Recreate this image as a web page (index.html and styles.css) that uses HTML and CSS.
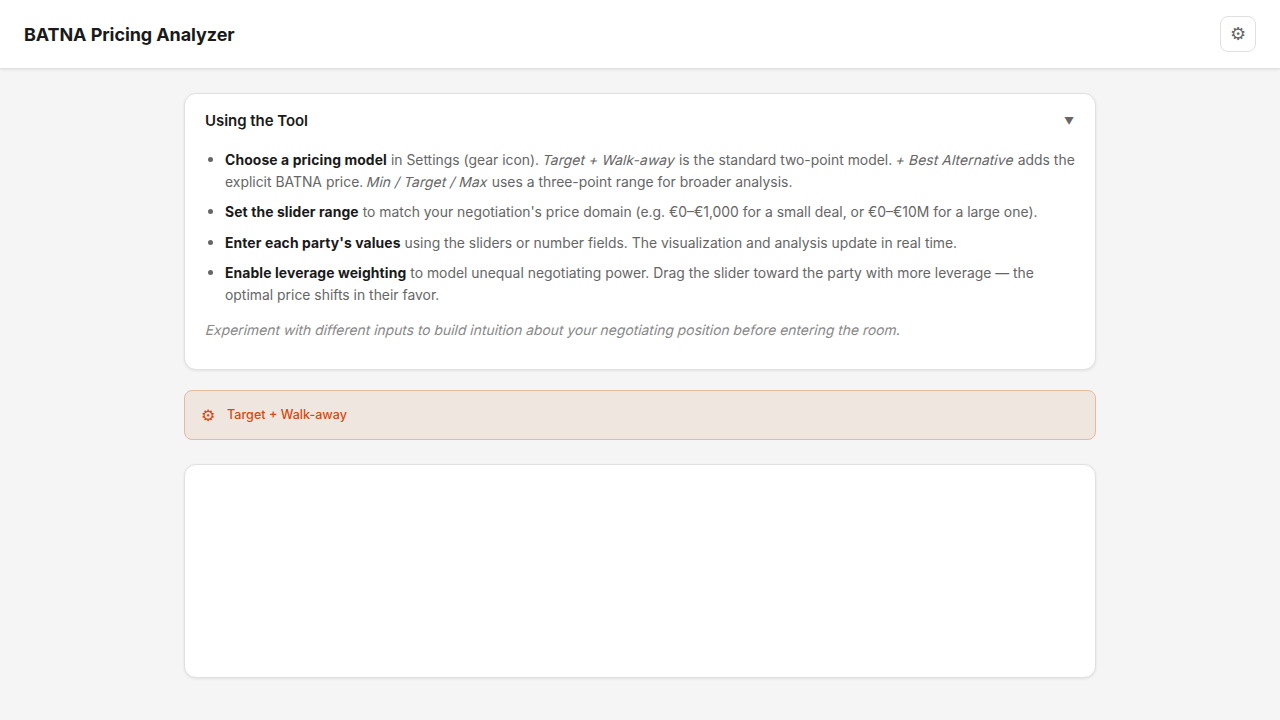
FILE: index.html
```html
<!DOCTYPE html>
<html lang="en">
<head>
<meta charset="utf-8">
<title>BATNA Pricing Analyzer</title>
<link rel="stylesheet" href="styles.css">
</head>
<body>
<header class="topbar">
  <h1 class="title">BATNA Pricing Analyzer</h1>
  <button class="gear-btn" type="button">⚙</button>
</header>
<main class="content">
  <section class="card help">
    <div class="help-head">
      <h2 class="help-title">Using the Tool</h2>
      <span class="caret">▼</span>
    </div>
    <ul class="help-list">
      <li><strong>Choose a pricing model</strong> in Settings (gear icon). <em class="slant inline">Target + Walk-away</em> is the standard two-point model. <em class="slant inline">+ Best Alternative</em> adds the explicit BATNA price. <em class="slant inline">Min / Target / Max</em> uses a three-point range for broader analysis.</li>
      <li><strong>Set the slider range</strong> to match your negotiation's price domain (e.g. €0–€1,000 for a small deal, or €0–€10M for a large one).</li>
      <li><strong>Enter each party's values</strong> using the sliders or number fields. The visualization and analysis update in real time.</li>
      <li><strong>Enable leverage weighting</strong> to model unequal negotiating power. Drag the slider toward the party with more leverage — the optimal price shifts in their favor.</li>
    </ul>
    <p class="help-note"><span class="slant">Experiment with different inputs to build intuition about your negotiating position before entering the room.</span></p>
  </section>
  <div class="model-bar">
    <span class="model-icon">⚙</span>
    <span class="model-name">Target + Walk-away</span>
  </div>
  <section class="card empty"></section>
</main>
</body>
</html>
```
FILE: styles.css
```css
* { box-sizing: border-box; }
html, body { margin: 0; height: 100%; }
body {
  background: #f5f5f5;
  color: #1a1a1a;
  font-family: Inter, "Liberation Sans", sans-serif;
  overflow: hidden;
}
.topbar {
  height: 69px;
  background: #fff;
  border-bottom: 1px solid #e0e0e0;
  box-shadow: 0 1px 3px rgba(0,0,0,0.08);
  padding: 0 24px;
  display: flex;
  align-items: center;
  justify-content: space-between;
}
.title { margin: 0; padding-top: 2px; font-size: 18px; font-weight: 700; line-height: 1; letter-spacing: -0.09px; }
.gear-btn {
  width: 36px;
  height: 36px;
  padding: 0;
  background: #fff;
  border: 1px solid #e0e0e0;
  border-radius: 8px;
  color: #666;
  font-size: 18px;
  font-family: Inter, "DejaVu Sans", sans-serif;
  line-height: 1;
}
.content {
  width: 912px;
  margin: 0 auto;
  padding-top: 24px;
  display: flex;
  flex-direction: column;
}
.card {
  background: #fff;
  border: 1px solid #e0e0e0;
  border-radius: 12px;
  box-shadow: 0 1px 3px rgba(0,0,0,0.08);
}
.help { height: 277px; padding: 0 20px; }
.help-head {
  height: 53px;
  display: flex;
  align-items: center;
  justify-content: space-between;
}
.help-title { margin: 0; font-size: 15px; font-weight: 600; letter-spacing: -0.05px; }
.caret { font-size: 10px; color: #666; margin-right: 1px; }
.help-list {
  margin: 0;
  padding: 1.9px 0 0 20px;
  list-style: disc;
  color: #666;
  font-size: 13.92px;
  line-height: 22.27px;
}
.help-list li { margin-bottom: 8px; }
.help-list li::marker { font-size: 15px; }
.help-list strong { color: #1a1a1a; font-weight: 700; letter-spacing: 0.1px; }
.slant {
  display: inline-block;
  font-style: normal;
  transform: skewX(-14deg);
}
.slant.inline { letter-spacing: 0.05px; }
.help-note {
  margin: 12.1px 0 0 1px;
  font-size: 13.86px;
  line-height: 22.27px;
  color: #888;
}
.model-bar {
  height: 50px;
  margin-top: 20px;
  padding: 0 16px;
  display: flex;
  align-items: center;
  gap: 12px;
  background: #f0e6e0;
  border: 1px solid #e8b89f;
  border-radius: 8px;
  color: #d9480f;
  font-size: 12.6px;
  font-weight: 500;
}
.model-icon { font-size: 16px; }
.model-name { padding-bottom: 1px; }
.empty { height: 214px; margin-top: 24px; }
```
